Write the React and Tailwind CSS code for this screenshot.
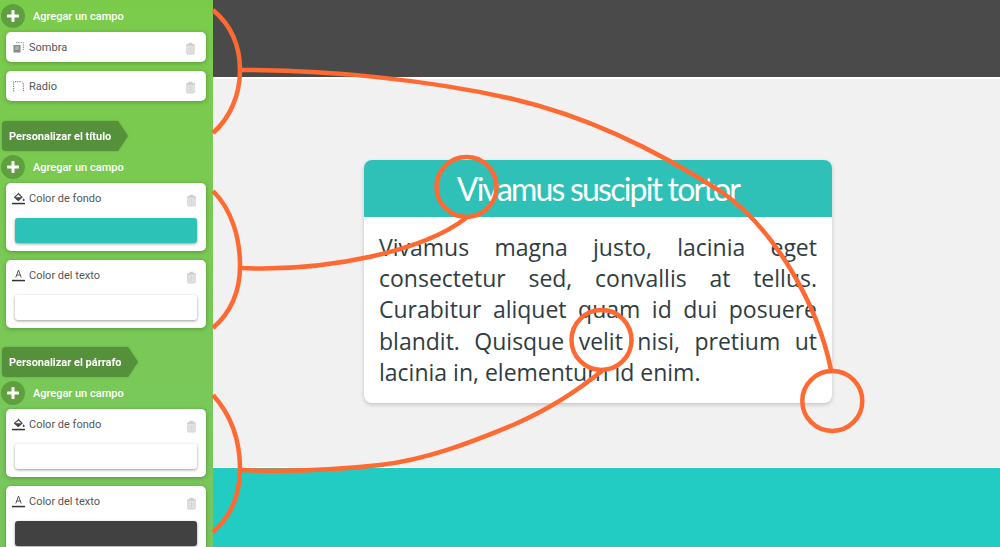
import React from "react";

const Trash = () => (
  <svg width="11" height="13" viewBox="0 0 11 13" fill="none" stroke="#cfcfcf" strokeWidth="1" className="shrink-0">
    <path d="M3.5 1.5h4M1 3h9" strokeWidth="1.4" />
    <rect x="1.8" y="3.5" width="7.4" height="8.5" rx="1" fill="#e6e6e6" />
    <path d="M4 5v5.5M5.5 5v5.5M7 5v5.5" strokeWidth="0.7" />
  </svg>
);

const Plus = () => (
  <span className="w-6 h-6 rounded-full bg-[#5f9f40] flex items-center justify-center shrink-0">
    <svg width="12" height="12" viewBox="0 0 12 12"><path d="M6 1v10M1 6h10" stroke="#fff" strokeWidth="3" strokeLinecap="round" /></svg>
  </span>
);

const AddRow = () => (
  <div className="flex items-center h-6 pl-[1px] gap-[8px] text-white text-[11px] font-medium leading-none">
    <Plus />
    <span>Agregar un campo</span>
  </div>
);

const Tag = ({ children, width }) => (
  <div className="flex h-[30px] drop-shadow-[0_0_1px_rgba(60,110,40,0.4)]">
    <div className={`${width} bg-[#55913a] rounded-l-[4px] flex items-center pl-[7px] text-white text-[11px] font-bold leading-none whitespace-nowrap`}>{children}</div>
    <svg width="10" height="30" viewBox="0 0 10 30"><path d="M0 0 L10 15 L0 30 Z" fill="#55913a" /></svg>
  </div>
);

const ShadowIcon = () => (
  <svg width="11" height="11" viewBox="0 0 11 11" fill="none" className="shrink-0">
    <rect x="0.5" y="3" width="7" height="7.5" fill="#8a8a8a" />
    <path d="M3 0.6h7.4V8" stroke="#8a8a8a" strokeDasharray="1.3 1" />
    <path d="M2 5h4M2 7h4" stroke="#eee" strokeWidth="0.7" />
  </svg>
);
const RadiusIcon = () => (
  <svg width="11" height="11" viewBox="0 0 11 11" fill="none" className="shrink-0">
    <path d="M0.7 10.4V0.7H7.5Q10.4 0.7 10.4 3.5V10.4" stroke="#6a6a6a" strokeDasharray="1.2 1" />
  </svg>
);
const FillIcon = () => (
  <svg width="14" height="13" viewBox="0 0 14 13" className="shrink-0">
    <path d="M6 0.3 L7 1.3 L10.8 5.2 L6.8 8.8 Q6.2 9.2 5.6 8.8 L2.2 5.8 Q1.8 5.2 2.2 4.8 L6 1.4 Z" fill="#444" />
    <path d="M3.4 5.3 L6.5 2.6 L9.2 5.3 Z" fill="#fff" />
    <path d="M11.6 6.2 Q13 8 12.6 8.6 Q11.6 9.6 10.8 8.6 Q10.4 8 11.6 6.2 Z" fill="#444" />
    <rect x="0" y="10.8" width="13" height="1.5" fill="#333" />
  </svg>
);
const TextIcon = () => (
  <svg width="14" height="13" viewBox="0 0 14 13" fill="none" className="shrink-0">
    <path d="M3.8 8.5 L6.5 1 L9.2 8.5 M4.8 6h3.4" stroke="#555" strokeWidth="1" />
    <rect x="0" y="10.8" width="13" height="1.5" fill="#333" />
  </svg>
);

const SimpleCard = ({ icon, label }) => (
  <div className="ml-[6px] w-[200px] h-[30px] bg-white rounded-[5px] shadow-[0_1px_4px_rgba(40,90,20,0.45)] flex items-center pl-[7px] pr-[10px]">
    <span className="w-[16px] flex">{icon}</span>
    <span className="text-[11px] text-[#555] leading-none">{label}</span>
    <span className="ml-auto pt-[3px]"><Trash /></span>
  </div>
);

const ColorCard = ({ icon, label, swatch }) => (
  <div className="ml-[6px] w-[200px] h-[68px] bg-white rounded-[5px] shadow-[0_1px_4px_rgba(40,90,20,0.45)] pl-[6px] pr-[9px] pt-[9px]">
    <div className="flex items-start h-[26px]">
      <span className="w-[17px] flex">{icon}</span>
      <span className="text-[11px] text-[#555] leading-[13px]">{label}</span>
      <span className="ml-auto pt-[2px]"><Trash /></span>
    </div>
    <div className={`ml-[3px] w-[182px] h-[25px] rounded-[3px] shadow-[0_1px_3px_rgba(0,0,0,0.4)] ${swatch}`} />
  </div>
);

const Curves = () => (
  <svg className="absolute inset-0 pointer-events-none" width="1000" height="547" viewBox="0 0 1000 547" fill="none" stroke="#ff6a33" strokeWidth="4.5">
    <path d="M213 10 C232 26 240 48 240 70 C240 95 230 118 213 133" />
    <path d="M240 70 C330 70 430 80 513 99 C590 117 660 152 723 193 C775 230 818 305 831 370" />
    <circle cx="832.3" cy="401" r="30" />
    <path d="M213 191 C232 210 240 238 240 266 C240 292 230 313 213 328" />
    <path d="M240 268 C330 272 425 250 466 218" />
    <circle cx="466.5" cy="187" r="30" />
    <path d="M213 395 C232 416 240 442 240 469 C240 495 230 517 213 532" />
    <path d="M240 470 C290 472 335 470 380 465 C425 460 470 443 513 425 C545 411 575 393 603 370" />
    <circle cx="601.5" cy="340" r="30" />
  </svg>
);

export default function App() {
  return (
    <div className="relative w-[1000px] h-[547px] overflow-hidden flex font-['Roboto',sans-serif]">
      <aside className="w-[213px] h-full shrink-0 overflow-hidden bg-gradient-to-b from-[#7bcb4b] to-[#78c75e] pt-[4px]">
        <AddRow />
        <div className="mt-[4px] flex flex-col gap-[9px]">
          <SimpleCard icon={<ShadowIcon />} label="Sombra" />
          <SimpleCard icon={<RadiusIcon />} label="Radio" />
        </div>
        <div className="mt-[20px] ml-[2px]"><Tag width="w-[116px]">Personalizar el título</Tag></div>
        <div className="mt-[4px]"><AddRow /></div>
        <div className="mt-[4px] flex flex-col gap-[9px]">
          <ColorCard icon={<FillIcon />} label="Color de fondo" swatch="bg-[#2dc2b7]" />
          <ColorCard icon={<TextIcon />} label="Color del texto" swatch="bg-white" />
        </div>
        <div className="mt-[19px] ml-[2px]"><Tag width="w-[126px]">Personalizar el párrafo</Tag></div>
        <div className="mt-[4px]"><AddRow /></div>
        <div className="mt-[4px] flex flex-col gap-[9px]">
          <ColorCard icon={<FillIcon />} label="Color de fondo" swatch="bg-white" />
          <ColorCard icon={<TextIcon />} label="Color del texto" swatch="bg-[#414141]" />
        </div>
      </aside>
      <main className="flex-1 flex flex-col">
        <div className="h-[79px] bg-[#4a4a4a] border-b-2 border-white" />
        <div className="h-[388px] bg-[#f1f1f1] pt-[81px] pl-[151px]">
          <div className="w-[468px] h-[243px] rounded-[8px] bg-white shadow-[0_2px_4px_rgba(0,0,0,0.18)] overflow-hidden">
            <div className="h-[57px] bg-[#2fc1b7] flex items-center justify-center text-white text-[32px] tracking-[-1.8px] font-normal font-['Lato',sans-serif] leading-none">
              Vivamus suscipit tortor
            </div>
            <p className="px-[15px] pt-[15px] text-[23px] leading-[31.2px] text-[#2f3d43] text-justify font-['Open_Sans',sans-serif]">
              Vivamus magna justo, lacinia eget consectetur sed, convallis at tellus. Curabitur aliquet quam id dui posuere blandit. Quisque velit nisi, pretium ut lacinia in, elementum id enim.
            </p>
          </div>
        </div>
        <div className="flex-1 bg-[#22ccc2] border-t border-white" />
      </main>
      <Curves />
    </div>
  );
}
